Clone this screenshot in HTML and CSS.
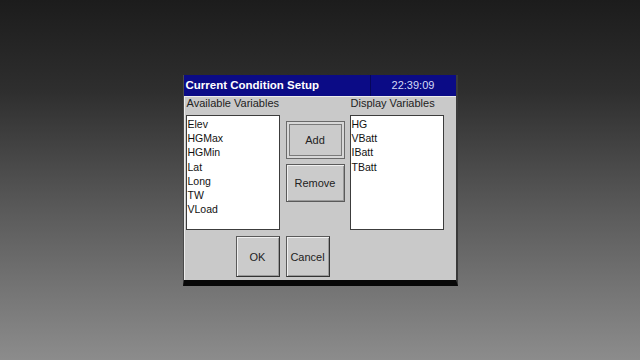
FILE: index.html
```html
<!DOCTYPE html>
<html lang="en">
<head>
    <meta charset="UTF-8">
    <title>Current Condition Setup</title>
    <link rel="stylesheet" href="styles.css">
</head>
<body>
    <div class="dialog">
        <div class="titlebar">
            <span class="title">Current Condition Setup</span>
            <span class="clock">22:39:09</span>
        </div>
        <div class="content">
            <div class="columns">
                <div class="label">Available Variables</div>
                <div></div>
                <div class="label">Display Variables</div>

                <ul class="listbox">
                    <li>Elev</li>
                    <li>HGMax</li>
                    <li>HGMin</li>
                    <li>Lat</li>
                    <li>Long</li>
                    <li>TW</li>
                    <li>VLoad</li>
                </ul>
                <div class="actions">
                    <button type="button" class="button default side">Add</button>
                    <button type="button" class="button side">Remove</button>
                </div>
                <ul class="listbox">
                    <li>HG</li>
                    <li>VBatt</li>
                    <li>IBatt</li>
                    <li>TBatt</li>
                </ul>
            </div>
            <div class="footer">
                <button type="button" class="button square">OK</button>
                <button type="button" class="button square">Cancel</button>
            </div>
        </div>
    </div>
</body>
</html>
```

FILE: styles.css
```css
html, body {
    height: 100%;
}
body {
    margin: 0;
    background: linear-gradient(to bottom, #1c1c1c 0%, #2e2e2e 25%, #5c5c5c 60%, #8c8c8c 100%);
    font-family: "Liberation Sans", Arial, sans-serif;
    overflow: hidden;
}
.dialog {
    width: 272px;
    margin: 75px auto 0;
    border-left: 1px solid #4a4a4a;
    border-right: 2px solid #3a3a3a;
    border-bottom: 6px solid #080808;
    background-color: #c9c9c9;
}
.titlebar {
    display: flex;
    height: 21px;
    background-color: #0b0b86;
    color: #fff;
}
.title {
    flex: 1;
    padding-left: 2px;
    font-weight: bold;
    font-size: 11.5px;
    line-height: 21px;
}
.clock {
    width: 85px;
    border-left: 1px solid #06065a;
    text-align: center;
    font-size: 11px;
    line-height: 20px;
    color: #d4daf6;
}
.content {
    height: 184px;
    box-shadow: inset 1px 1px #ececec;
}
.columns {
    display: grid;
    grid-template-columns: 94px 70px 94px;
    padding: 1px 0 0 2px;
}
.label {
    height: 18px;
    font-size: 11px;
    line-height: 13px;
    color: #222;
    padding-left: 1px;
}
.listbox {
    list-style: none;
    margin: 0;
    padding: 1px 0 0 1px;
    height: 112px;
    border: 1px solid #3c3c3c;
    background-color: #fff;
    font-size: 10.5px;
    line-height: 14.2px;
    color: #111;
}
.actions {
    display: flex;
    flex-direction: column;
    gap: 5px;
    padding: 6px 0 0 6px;
}
.button {
    font-family: "Liberation Sans", Arial, sans-serif;
    font-size: 11px;
    color: #222;
    background-color: #cbcbcb;
    border: 1px solid #5a5a5a;
    box-shadow: inset 1px 1px #f0f0f0, inset -1px -1px #9a9a9a;
    padding: 0;
}
.side {
    width: 59px;
    height: 38px;
}
.default {
    border-color: #6a6a6a;
    box-shadow: inset 0 0 0 2px #d8d8d8, inset 0 0 0 3px #7a7a7a;
}
.footer {
    display: flex;
    gap: 6px;
    padding: 6px 0 0 52px;
}
.square {
    width: 44px;
    height: 41px;
    border-right-color: #333;
    border-bottom-color: #333;
}
```
